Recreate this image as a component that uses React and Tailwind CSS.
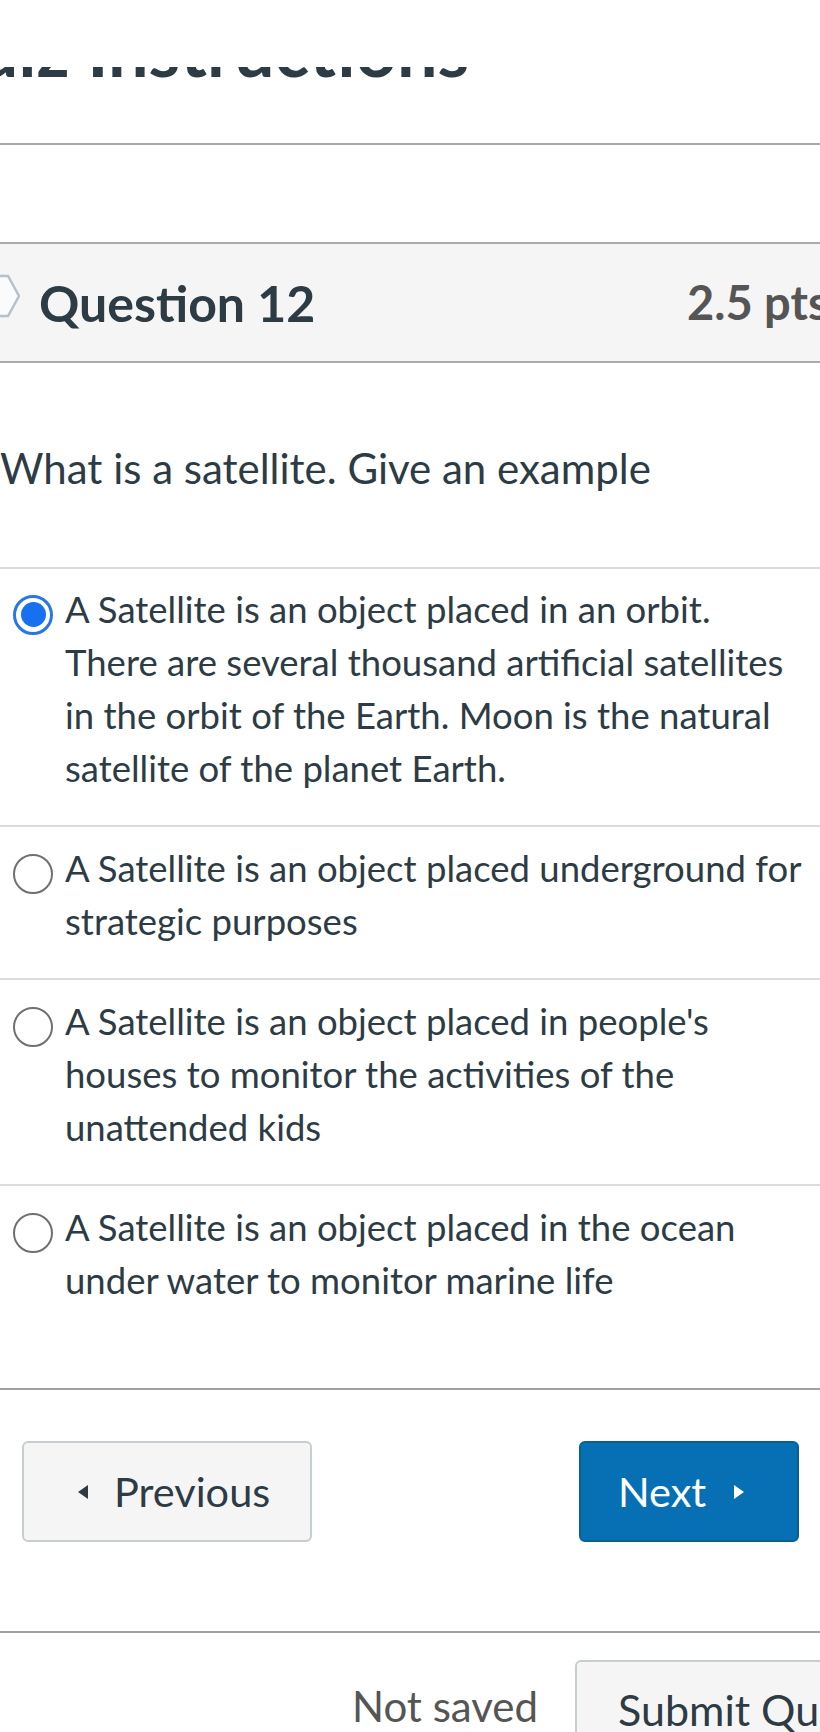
import React from "react";

function Radio({ checked }) {
  if (checked) {
    return (
      <span className="mt-[10px] flex h-[40px] w-[40px] shrink-0 items-center justify-center rounded-full border-[3px] border-[#2877e6] bg-white">
        <span className="block h-[25px] w-[25px] rounded-full bg-[#1670f0]" />
      </span>
    );
  }
  return (
    <span className="mt-[10px] block h-[40px] w-[40px] shrink-0 rounded-full border-2 border-[#707070] bg-white" />
  );
}

function Answer({ checked, text, className }) {
  return (
    <div className={`flex items-start pl-[13px] ${className}`}>
      <div className="flex h-[53px] w-[52px] shrink-0 items-center">
        <Radio checked={checked} />
      </div>
      <p className="w-[746px] shrink-0 text-[36.5px] leading-[53px]">{text}</p>
    </div>
  );
}

export default function App() {
  return (
    <div className="h-[1732px] w-[820px] overflow-hidden bg-white font-['Lato',sans-serif] text-[#2d3b45]">
      <div className="h-[145px] border-b-2 border-[#a9a9a9] pt-[67px]">
        <div className="h-[12px] overflow-hidden">
          <h1 className="ml-[-80px] mt-[-54px] whitespace-nowrap text-[72px] font-bold leading-none text-[#2d3b45]">
            Quiz Instructions
          </h1>
        </div>
      </div>
      <div className="h-[97px]" />
      <div className="flex h-[121px] w-[900px] items-center border-y-2 border-[#ababab] bg-[#f5f5f5]">
        <div className="flex w-[687px] shrink-0 items-center">
          <svg width="32" height="44" viewBox="0 0 32 44" className="ml-[-12px] mt-[-14px] shrink-0">
            <polygon points="1,2 20,2 31,22 20,42 1,42" fill="#fbfbfb" stroke="#b3c2cc" strokeWidth="2.5" />
          </svg>
          <span className="ml-[19px] text-[50px] font-bold leading-none">Question 12</span>
        </div>
        <span className="whitespace-nowrap text-[47px] font-bold leading-none text-[#555555]">2.5 pts</span>
      </div>
      <div className="flex h-[204px] items-center pt-[6px]">
        <p className="whitespace-nowrap text-[42px] leading-none">What is a satellite. Give an example</p>
      </div>
      <div className="border-t-2 border-[#dcdcdc]">
        <Answer
          checked
          className="border-b-2 border-[#dcdcdc] pb-[30px] pt-[14px]"
          text="A Satellite is an object placed in an orbit. There are several thousand artificial satellites in the orbit of the Earth. Moon is the natural satellite of the planet Earth."
        />
        <Answer
          className="border-b-2 border-[#dcdcdc] pb-[30px] pt-[15px]"
          text="A Satellite is an object placed underground for strategic purposes"
        />
        <Answer
          className="border-b-2 border-[#dcdcdc] pb-[30px] pt-[15px]"
          text="A Satellite is an object placed in people's houses to monitor the activities of the unattended kids"
        />
        <Answer
          className="h-[204px] border-b-2 border-[#a0a0a0] pt-[15px]"
          text="A Satellite is an object placed in the ocean under water to monitor marine life"
        />
      </div>
      <div className="flex h-[243px] items-start justify-between border-b-2 border-[#a0a0a0] pl-[22px] pr-[21px] pt-[51px]">
        <button className="flex h-[101px] w-[290px] items-center rounded-[6px] border-2 border-[#c7cdd1] bg-[#f5f5f5] pl-[53px] text-[41.5px] text-[#2d3b45]">
          <svg width="12" height="16" viewBox="0 0 12 16" className="shrink-0">
            <polygon points="11,1 11,15 1,8" fill="#2d3b45" />
          </svg>
          <span className="ml-[25px] leading-none">Previous</span>
        </button>
        <button className="flex h-[101px] w-[220px] items-center rounded-[6px] border-2 border-[#0a5f91] bg-[#0770b5] pl-[37px] text-[41.5px] text-white">
          <span className="leading-none">Next</span>
          <svg width="12" height="16" viewBox="0 0 12 16" className="ml-[27px] shrink-0">
            <polygon points="1,1 1,15 11,8" fill="#ffffff" />
          </svg>
        </button>
      </div>
      <div className="flex items-start pt-[27px]">
        <span className="ml-[352px] mt-[25px] whitespace-nowrap text-[42px] leading-none text-[#555555]">Not saved</span>
        <button className="ml-[37px] flex h-[110px] w-[300px] shrink-0 items-start rounded-[6px] border-2 border-[#c7cdd1] bg-[#f5f5f5] pl-[41px] pt-[26px] text-[43px] leading-none text-[#2d3b45]">
          <span className="whitespace-nowrap">Submit Quiz</span>
        </button>
      </div>
    </div>
  );
}
